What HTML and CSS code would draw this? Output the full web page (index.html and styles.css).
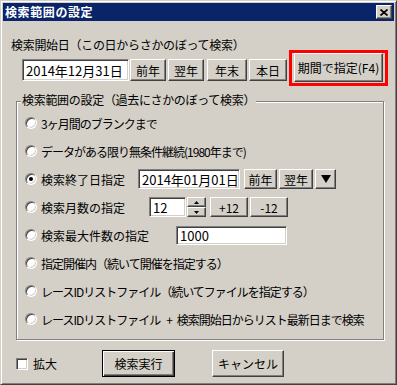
FILE: index.html
```html
<!DOCTYPE html>
<html lang="ja">
<head>
  <meta charset="UTF-8">
  <title>検索範囲の設定</title>
  <link rel="stylesheet" href="styles.css">
</head>
<body>

  <div class="window">
    <div class="titlebar">
      <span class="title">検索範囲の設定</span>
      <span class="close-btn">
        <svg width="8" height="7" viewBox="0 0 8 7"><path d="M0.5 0.5 L7.5 6.5 M7.5 0.5 L0.5 6.5" stroke="#000" stroke-width="1.7" fill="none"/></svg>
      </span>
    </div>

    <div class="client">
      <div class="start-label">検索開始日（この日からさかのぼって検索）</div>

      <div class="start-row">
        <div class="start-controls">
          <div class="field date-start">2014年12月31日</div>
          <button class="btn b-prev">前年</button>
          <button class="btn b-next">翌年</button>
          <button class="btn b-end">年末</button>
          <button class="btn b-today">本日</button>
        </div>
        <div class="highlight">
          <button class="btn b-period">期間で指定(F4)</button>
        </div>
      </div>

      <div class="group">
        <div class="group-title">検索範囲の設定（過去にさかのぼって検索）</div>

        <div class="option">
          <span class="radio"></span>
          <span class="narrow">3ヶ月間のブランクまで</span>
        </div>

        <div class="option">
          <span class="radio"></span>
          <span class="narrow">データがある限り無条件継続(1980年まで)</span>
        </div>

        <div class="option">
          <span class="radio checked"></span>
          <span class="lbl lbl-end">検索終了日指定</span>
          <div class="field date-end">2014年01月01日</div>
          <button class="btn sm b-prev2">前年</button>
          <button class="btn sm b-next2">翌年</button>
          <button class="btn sm b-drop">
            <svg width="10" height="8" viewBox="0 0 10 8"><polygon points="0,0 10,0 5,8" fill="#000"/></svg>
          </button>
        </div>

        <div class="option">
          <span class="radio"></span>
          <span class="lbl lbl-months">検索月数の指定</span>
          <div class="field months">12</div>
          <div class="spinner">
            <span class="spin">
              <svg width="5" height="3" viewBox="0 0 5 3"><polygon points="2.5,0 5,3 0,3" fill="#000"/></svg>
            </span>
            <span class="spin">
              <svg width="5" height="3" viewBox="0 0 5 3"><polygon points="0,0 5,0 2.5,3" fill="#000"/></svg>
            </span>
          </div>
          <button class="btn sm b-plus">+12</button>
          <button class="btn sm b-minus">-12</button>
        </div>

        <div class="option">
          <span class="radio"></span>
          <span class="lbl lbl-max">検索最大件数の指定</span>
          <div class="field max-count">1000</div>
        </div>

        <div class="option">
          <span class="radio"></span>
          <span class="narrow">指定開催内（続いて開催を指定する）</span>
        </div>

        <div class="option">
          <span class="radio"></span>
          <span class="narrow">レースIDリストファイル（続いてファイルを指定する）</span>
        </div>

        <div class="option">
          <span class="radio"></span>
          <span class="narrow">レースIDリストファイル<span class="plus">+</span>検索開始日からリスト最新日まで検索</span>
        </div>
      </div>

      <div class="footer">
        <label class="check-wrap"><span class="checkbox"></span>拡大</label>
        <button class="btn default b-run">検索実行</button>
        <button class="btn b-cancel">キャンセル</button>
      </div>
    </div>
  </div>

</body>
</html>
```

FILE: styles.css
```css
* {
  box-sizing: border-box;
}

body {
  margin: 0;
  background: #d4d0c8;
  font-family: "Noto Sans CJK JP", "DejaVu Sans", sans-serif;
  font-size: 12px;
  color: #000;
}

.window {
  width: 397px;
  height: 385px;
  padding: 2px;
  background: #d4d0c8;
  border: 1px solid;
  border-color: #d4d0c8 #404040 #404040 #d4d0c8;
  box-shadow: inset 1px 1px #fff, inset -1px -1px #808080;
}

.titlebar {
  height: 18px;
  background: #0a246a;
  display: flex;
  align-items: center;
  justify-content: space-between;
  padding: 0 2px 0 2px;
}

.title {
  color: #fff;
  font-weight: bold;
  font-size: 12px;
  line-height: 14px;
  letter-spacing: 0.6px;
}

.close-btn {
  width: 16px;
  height: 14px;
  display: flex;
  align-items: center;
  justify-content: center;
  background: #d4d0c8;
  border: 1px solid;
  border-color: #fff #404040 #404040 #fff;
  box-shadow: inset -1px -1px #808080;
}

.client {
  padding-left: 8px;
}

.start-label {
  margin-top: 17px;
  height: 14px;
  line-height: 14px;
  letter-spacing: -0.3px;
}

.start-row {
  display: flex;
  align-items: flex-start;
  margin-top: -2px;
}

.start-controls {
  display: flex;
  margin-top: 9px;
  margin-left: 11px;
  height: 22px;
}

/* classic 3d button */
.btn {
  font-family: inherit;
  font-size: 12px;
  color: #000;
  padding: 0;
  height: 22px;
  background: #d4d0c8;
  border: 1px solid;
  border-color: #fff #404040 #404040 #fff;
  box-shadow: inset -1px -1px #808080;
  display: flex;
  align-items: center;
  justify-content: center;
}

.btn.sm {
  height: 20px;
}

.btn.default {
  border: 1px solid #000;
  box-shadow: inset 1px 1px #fff, inset -1px -1px #404040, inset -2px -2px #808080;
}

/* sunken text box */
.field {
  background: #fff;
  border: 1px solid;
  border-color: #808080 #fff #fff #808080;
  box-shadow: inset 1px 1px #404040, inset -1px -1px #d4d0c8;
  font-size: 13px;
  padding-left: 3px;
  display: flex;
  align-items: center;
  white-space: nowrap;
}

.date-start { width: 107px; height: 22px; }
.b-prev { width: 36px; margin-left: 1px; }
.b-next { width: 36px; margin-left: 2px; }
.b-end { width: 40px; margin-left: 3px; }
.b-today { width: 38px; margin-left: 2px; }

.highlight {
  margin-left: 2px;
  border: 3px solid #ff0000;
  padding: 0 2px 1px 2px;
}

.b-period {
  width: 89px;
  height: 29px;
}

.group {
  position: relative;
  margin-top: 15px;
  margin-left: 5px;
  width: 368px;
  padding: 7px 0 6px 8px;
  border: 1px solid #808080;
  box-shadow: inset 1px 1px #fff, 1px 1px #fff;
}

.group-title {
  position: absolute;
  top: -9px;
  left: 4px;
  padding: 0 1px;
  line-height: 14px;
  background: #d4d0c8;
  letter-spacing: -0.3px;
}

.option {
  height: 28px;
  display: flex;
  align-items: center;
  white-space: nowrap;
}

.narrow {
  letter-spacing: -1px;
}

.plus {
  margin: 0 5px 0 6px;
}

.radio {
  position: relative;
  width: 12px;
  height: 12px;
  margin-right: 4px;
  border-radius: 50%;
  background: #fff;
  border: 1px solid;
  border-color: #808080 #fff #fff #808080;
  box-shadow: inset 1px 1px #404040, inset -1px -1px #d4d0c8;
  flex-shrink: 0;
}

.radio.checked::after {
  content: "";
  position: absolute;
  left: 3px;
  top: 3px;
  width: 4px;
  height: 4px;
  border-radius: 50%;
  background: #000;
}

.lbl { flex-shrink: 0; }
.lbl-end { width: 97px; }
.lbl-months { width: 108px; }
.lbl-max { width: 135px; }

.date-end { width: 102px; height: 20px; }
.b-prev2 { width: 33px; margin-left: 4px; }
.b-next2 { width: 34px; margin-left: 2px; }
.b-drop { width: 21px; margin-left: 2px; }

.months { width: 37px; height: 20px; }

.spinner {
  margin-left: 1px;
  width: 19px;
  height: 20px;
  display: flex;
  flex-direction: column;
}

.spin {
  height: 10px;
  display: flex;
  align-items: center;
  justify-content: center;
  background: #d4d0c8;
  border: 1px solid;
  border-color: #fff #404040 #404040 #fff;
  box-shadow: inset -1px -1px #808080;
}

.b-plus { width: 38px; margin-left: 4px; }
.b-minus { width: 38px; margin-left: 2px; }

.max-count { width: 111px; height: 19px; }

.footer {
  margin-top: 10px;
  height: 27px;
  display: flex;
  align-items: center;
}

.check-wrap {
  width: 86px;
  margin-left: 5px;
  display: flex;
  align-items: center;
}

.checkbox {
  width: 12px;
  height: 12px;
  margin-right: 5px;
  background: #fff;
  border: 1px solid;
  border-color: #808080 #fff #fff #808080;
  box-shadow: inset 1px 1px #404040, inset -1px -1px #d4d0c8;
}

.b-run { width: 73px; height: 27px; }
.b-cancel { width: 72px; height: 27px; margin-left: 37px; }
```
